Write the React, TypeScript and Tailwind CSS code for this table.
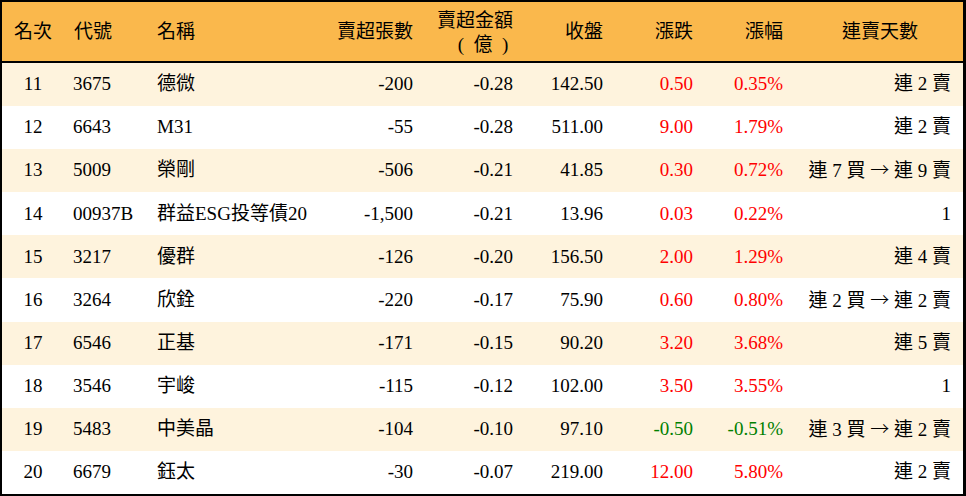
import React from "react";

type Row = {
  rank: string;
  code: string;
  name: string;
  shares: string;
  amount: string;
  close: string;
  change: string;
  pct: string;
  streak: string;
  up: boolean;
};

const rows: Row[] = [
  { rank: "11", code: "3675", name: "德微", shares: "-200", amount: "-0.28", close: "142.50", change: "0.50", pct: "0.35%", streak: "連 2 賣", up: true },
  { rank: "12", code: "6643", name: "M31", shares: "-55", amount: "-0.28", close: "511.00", change: "9.00", pct: "1.79%", streak: "連 2 賣", up: true },
  { rank: "13", code: "5009", name: "榮剛", shares: "-506", amount: "-0.21", close: "41.85", change: "0.30", pct: "0.72%", streak: "連 7 買 → 連 9 賣", up: true },
  { rank: "14", code: "00937B", name: "群益ESG投等債20", shares: "-1,500", amount: "-0.21", close: "13.96", change: "0.03", pct: "0.22%", streak: "1", up: true },
  { rank: "15", code: "3217", name: "優群", shares: "-126", amount: "-0.20", close: "156.50", change: "2.00", pct: "1.29%", streak: "連 4 賣", up: true },
  { rank: "16", code: "3264", name: "欣銓", shares: "-220", amount: "-0.17", close: "75.90", change: "0.60", pct: "0.80%", streak: "連 2 買 → 連 2 賣", up: true },
  { rank: "17", code: "6546", name: "正基", shares: "-171", amount: "-0.15", close: "90.20", change: "3.20", pct: "3.68%", streak: "連 5 賣", up: true },
  { rank: "18", code: "3546", name: "宇峻", shares: "-115", amount: "-0.12", close: "102.00", change: "3.50", pct: "3.55%", streak: "1", up: true },
  { rank: "19", code: "5483", name: "中美晶", shares: "-104", amount: "-0.10", close: "97.10", change: "-0.50", pct: "-0.51%", streak: "連 3 買 → 連 2 賣", up: false },
  { rank: "20", code: "6679", name: "鈺太", shares: "-30", amount: "-0.07", close: "219.00", change: "12.00", pct: "5.80%", streak: "連 2 賣", up: true },
];

const grid =
  "grid grid-cols-[60px_85px_186px_90px_100px_90px_90px_90px_1fr]";

function Streak({ text }: { text: string }) {
  const parts = text.split("→");
  if (parts.length === 1) return <>{text}</>;
  return (
    <>
      {parts[0]}
      <span className="font-['Noto_Sans_CJK_TC',sans-serif] font-light">→</span>
      {parts[1]}
    </>
  );
}

export default function App() {
  return (
    <div className="w-[966px] h-[496px] bg-white font-['Liberation_Serif','Noto_Sans_CJK_TC',serif] text-[19px] text-black">
      <div className="w-full h-full flex flex-col border-t-2 border-l-2 border-b-2 border-r-[3px] border-black">
        <div className={`${grid} h-[61px] shrink-0 bg-[#FAB84C] border-b-2 border-black items-center leading-[24px]`}>
          <div className="text-center pl-[2px]">名次</div>
          <div className="pl-[12px]">代號</div>
          <div className="pl-[10px]">名稱</div>
          <div className="text-right pr-[10px]">賣超張數</div>
          <div className="flex flex-col items-end pr-[10px] mt-[3px]">
            <span>賣超金額</span>
            <span className="w-[76px] text-center pl-[16px] whitespace-pre">{"(  億  )"}</span>
          </div>
          <div className="text-right pr-[10px]">收盤</div>
          <div className="text-right pr-[10px]">漲跌</div>
          <div className="text-right pr-[10px]">漲幅</div>
          <div className="text-center pl-[4px]">連賣天數</div>
        </div>
        <div className="flex-1 flex flex-col">
          {rows.map((r, i) => {
            const color = r.up ? "text-[#FF0000]" : "text-[#008000]";
            return (
              <div
                key={r.rank}
                className={`${grid} flex-1 items-center ${i % 2 === 0 ? "bg-[#FEF3DD]" : "bg-white"}`}
              >
                <div className="text-center pl-[2px]">{r.rank}</div>
                <div className="pl-[11px]">{r.code}</div>
                <div className="pl-[10px] whitespace-nowrap">{r.name}</div>
                <div className="text-right pr-[10px]">{r.shares}</div>
                <div className="text-right pr-[10px]">{r.amount}</div>
                <div className="text-right pr-[10px]">{r.close}</div>
                <div className={`text-right pr-[10px] ${color}`}>{r.change}</div>
                <div className={`text-right pr-[10px] ${color}`}>{r.pct}</div>
                <div className="text-right pr-[12px] whitespace-pre">
                  <Streak text={r.streak} />
                </div>
              </div>
            );
          })}
        </div>
      </div>
    </div>
  );
}
